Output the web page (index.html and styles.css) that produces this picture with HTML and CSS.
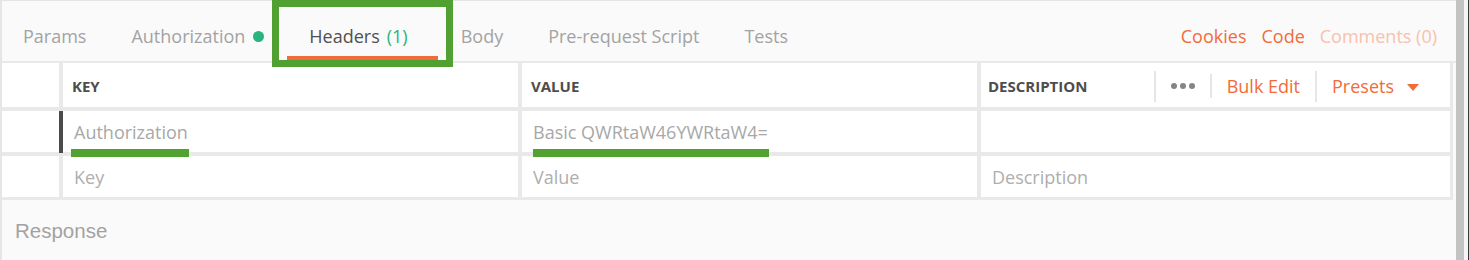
FILE: index.html
```html
<!DOCTYPE html>
<html lang="en">
<head>
    <meta charset="UTF-8">
    <meta name="viewport" content="width=device-width, initial-scale=1.0">
    <title>Headers</title>
    <link rel="stylesheet" href="styles.css">
</head>
<body>
    <div class="app">
        <div class="main">
            <div class="tabbar">
                <div class="tabs">
                    <div class="tab">Params</div>
                    <div class="tab">Authorization<span class="dot"></span></div>
                    <div class="tab active">Headers<span class="count">(1)</span></div>
                    <div class="tab">Body</div>
                    <div class="tab">Pre-request Script</div>
                    <div class="tab">Tests</div>
                </div>
                <div class="links">
                    <span class="link">Cookies</span>
                    <span class="link">Code</span>
                    <span class="link muted">Comments (0)</span>
                </div>
            </div>

            <div class="table">
                <div class="cell handle"></div>
                <div class="cell head">KEY</div>
                <div class="cell head">VALUE</div>
                <div class="cell head desc-head">
                    <span>DESCRIPTION</span>
                    <div class="actions">
                        <span class="sep"></span>
                        <span class="more"><i></i><i></i><i></i></span>
                        <span class="sep short"></span>
                        <span class="action">Bulk Edit</span>
                        <span class="sep"></span>
                        <span class="action">Presets</span>
                        <span class="caret"></span>
                    </div>
                </div>

                <div class="cell handle drag"></div>
                <div class="cell"><span class="text mark mark-key">Authorization</span></div>
                <div class="cell"><span class="text mark">Basic QWRtaW46YWRtaW4=</span></div>
                <div class="cell"></div>

                <div class="cell handle"></div>
                <div class="cell"><span class="text placeholder">Key</span></div>
                <div class="cell"><span class="text placeholder">Value</span></div>
                <div class="cell"><span class="text placeholder">Description</span></div>
            </div>

            <div class="response">Response</div>
        </div>
        <div class="scrollbar"></div>
        <div class="edge"></div>
    </div>
</body>
</html>
```

FILE: styles.css
```css
* {
    margin: 0;
    padding: 0;
    box-sizing: border-box;
}

body {
    background: #fafafa;
    font-family: 'Open Sans', sans-serif;
    color: #505050;
    overflow: hidden;
}

.app {
    display: flex;
    height: 260px;
}

.main {
    width: 1456px;
    border-left: 2px solid #e6e6e6;
    background: #fafafa;
}

.tabbar {
    display: flex;
    justify-content: space-between;
    height: 63px;
    border-top: 1px solid #e4e4e4;
    border-bottom: 2px solid #e9e9e9;
}

.tabs {
    display: flex;
    margin-left: -1.5px;
}

.tab {
    position: relative;
    height: 60px;
    padding: 23px 22.5px 0;
    font-size: 18px;
    line-height: 25px;
    color: #a3a3a3;
    border-bottom: 5px solid transparent;
    display: flex;
    align-items: flex-start;
}

.tab.active {
    color: #505050;
    border-bottom-color: #f26b3a;
}

/* green highlight drawn around the active tab */
.tab.active::before {
    content: '';
    position: absolute;
    top: -1px;
    left: -15px;
    right: -15px;
    bottom: -11px;
    border: 7px solid #50a032;
    z-index: 3;
}

.dot {
    width: 11px;
    height: 11px;
    border-radius: 50%;
    background: #26b47f;
    margin: 7px 0 0 8px;
}

.count {
    color: #26b47f;
    margin: 0 8px 0 7px;
}

.links {
    display: flex;
    gap: 15px;
    padding: 23px 19px 0 0;
    font-size: 18px;
    line-height: 25px;
}

.link {
    color: #f26b3a;
}

.link.muted {
    color: #f8c1ac;
}

.table {
    display: grid;
    grid-template-columns: 57px 455px 455px 1fr;
    grid-template-rows: 44px 41px 41px;
    gap: 4px;
    padding: 0 3px 3px 0;
    margin-right: 3px;
    background: #e9e9e9;
}

.cell {
    position: relative;
    background: #fff;
    display: flex;
    align-items: center;
    padding: 2px 0 0 11px;
}

.handle {
    padding: 0;
}

.drag::after {
    content: '';
    position: absolute;
    top: 0;
    bottom: -1px;
    right: -4px;
    width: 4px;
    background: #4b4b4b;
}

.head {
    padding-left: 9px;
    font-size: 15px;
    font-weight: 700;
    color: #4d4d4d;
}

.desc-head {
    padding-left: 7px;
}

.actions {
    display: flex;
    align-items: center;
    margin-left: auto;
    padding-right: 31px;
    font-weight: 400;
}

.sep {
    width: 2px;
    height: 31px;
    background: #e6e6e6;
}

.sep.short {
    height: 24px;
}

.more {
    display: flex;
    gap: 3px;
    padding: 0 15px;
}

.more i {
    width: 6px;
    height: 6px;
    border-radius: 50%;
    background: #858585;
}

.action {
    padding: 0 15px;
    font-size: 18px;
    color: #f26b3a;
}

.caret {
    width: 0;
    height: 0;
    margin-left: -2px;
    margin-top: 2px;
    border-left: 6px solid transparent;
    border-right: 6px solid transparent;
    border-top: 7px solid #f26b3a;
}

.text {
    display: inline-block;
    position: relative;
    font-size: 18px;
    line-height: 25px;
    color: #a8a8a8;
}

.placeholder {
    color: #aeaeae;
}

/* green marker under the filled-in header */
.mark::after {
    content: '';
    position: absolute;
    left: 0;
    right: -1px;
    top: 29px;
    height: 8px;
    background: #52a232;
    z-index: 2;
}

.mark-key::after {
    left: -3px;
}

.response {
    padding: 19px 0 0 13px;
    font-family: 'Liberation Sans', Arial, sans-serif;
    font-size: 20.5px;
    line-height: 23px;
    color: #a2a2a2;
}

.scrollbar {
    width: 8px;
    background: #c3c3c3;
}

.edge {
    width: 5px;
    background: #f5f5f5;
    border-right: 1px solid #3a3a3a;
}
```
